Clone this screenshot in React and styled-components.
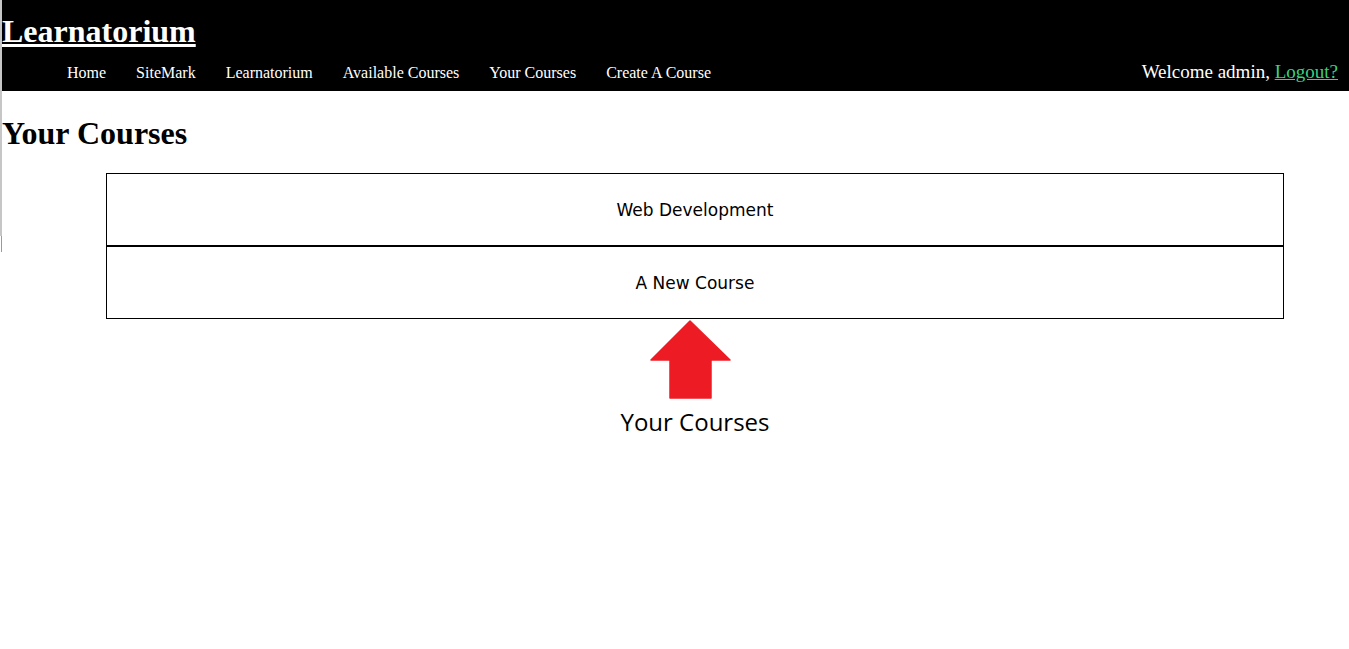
import React from "react";
import styled, { createGlobalStyle } from "styled-components";

const GlobalStyle = createGlobalStyle`
  html, body { margin: 0; padding: 0; background: #fff; }
  body { font-family: "Liberation Serif", "Times New Roman", serif; }
`;

const Page = styled.div`
  position: relative;
  padding-left: 2px;
  min-height: 649px;
  box-sizing: border-box;
  &::before {
    content: "";
    position: absolute;
    left: 0;
    top: 0;
    width: 2px;
    height: 236px;
    background: #c6c6c6;
  }
  &::after {
    content: "";
    position: absolute;
    left: 1px;
    top: 236px;
    width: 1px;
    height: 16px;
    background: #9a9a9a;
  }
`;

const Header = styled.header`
  background: #000;
  color: #fff;
  padding-top: 13px;
  height: 91px;
  box-sizing: border-box;
  display: flex;
  flex-direction: column;
`;

const Brand = styled.h1`
  margin: 0;
  font-size: 32px;
  font-weight: bold;
  line-height: 36.8px;
  a {
    color: #fff;
    text-decoration: underline;
  }
`;

const NavRow = styled.div`
  display: flex;
  justify-content: space-between;
  align-items: baseline;
  padding: 11px 11px 0 65px;
`;

const NavList = styled.nav`
  display: flex;
  gap: 30px;
`;

const NavLink = styled.a`
  color: #fff;
  text-decoration: none;
  font-size: 16px;
  line-height: 18px;
`;

const Welcome = styled.div`
  font-size: 19px;
  a {
    color: #3dd07e;
    text-decoration: underline;
  }
`;

const Main = styled.main`
  display: flex;
  flex-direction: column;
`;

const PageTitle = styled.h1`
  margin: 23.5px 0 21.4px;
  font-size: 32px;
  line-height: 36.8px;
  font-weight: bold;
  color: #000;
`;

const CourseList = styled.div`
  margin-left: 104px;
  width: 1178px;
  display: flex;
  flex-direction: column;
`;

const CourseItem = styled.div`
  height: 73px;
  box-sizing: border-box;
  border: 1px solid #000;
  display: flex;
  align-items: center;
  justify-content: center;
  font-family: "DejaVu Sans", sans-serif;
  font-size: 17px;
  color: #000;
  padding-top: 1px;
`;

const Annotation = styled.div`
  margin-left: 104px;
  width: 1178px;
  display: flex;
  flex-direction: column;
  align-items: center;
`;

const ArrowSvg = styled.svg`
  display: block;
  margin-right: 8px;
`;

const Caption = styled.div`
  margin-top: 5px;
  font-family: "Open Sans", sans-serif;
  font-size: 24px;
  color: #000;
`;

const navItems = [
  "Home",
  "SiteMark",
  "Learnatorium",
  "Available Courses",
  "Your Courses",
  "Create A Course",
];

const courses = ["Web Development", "A New Course"];

export default function App() {
  return (
    <>
      <GlobalStyle />
      <Page>
        <Header>
          <Brand>
            <a href="#">Learnatorium</a>
          </Brand>
          <NavRow>
            <NavList>
              {navItems.map((n) => (
                <NavLink key={n} href="#">
                  {n}
                </NavLink>
              ))}
            </NavList>
            <Welcome>
              Welcome admin, <a href="#">Logout?</a>
            </Welcome>
          </NavRow>
        </Header>
        <Main>
          <PageTitle>Your Courses</PageTitle>
          <CourseList>
            {courses.map((c) => (
              <CourseItem key={c}>{c}</CourseItem>
            ))}
          </CourseList>
          <Annotation>
            <ArrowSvg width="84" height="81" viewBox="0 0 84 81">
              <polygon
                points="41,2 81,41 62,41 62,79 21,79 21,41 2,41"
                fill="#ED1C24"
                stroke="#ED1C24"
                strokeWidth="1.5"
                strokeLinejoin="round"
              />
            </ArrowSvg>
            <Caption>Your Courses</Caption>
          </Annotation>
        </Main>
      </Page>
    </>
  );
}
